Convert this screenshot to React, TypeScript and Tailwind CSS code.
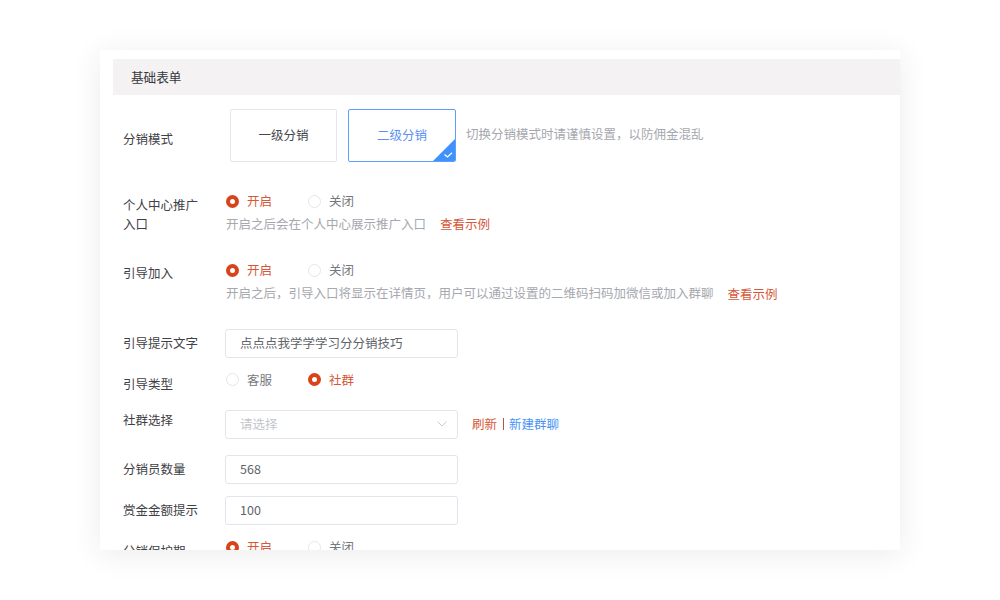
const font = { fontFamily: '"Noto Sans CJK SC", "Liberation Sans", sans-serif' };

function Radio({ label, checked }: { label: string; checked?: boolean }) {
  return (
    <div className="flex w-[82px] items-center">
      {checked ? (
        <span className="h-[13px] w-[13px] rounded-full border-[4px] border-[#d9431a] bg-white" />
      ) : (
        <span className="h-[13px] w-[13px] rounded-full border border-[#e4e6ec] bg-white" />
      )}
      <span className={`ml-[8px] ${checked ? 'text-[#d6573a]' : 'text-[#75787d]'}`}>{label}</span>
    </div>
  );
}

function Field({ value, placeholder, select }: { value?: string; placeholder?: string; select?: boolean }) {
  return (
    <div className="flex h-[29px] w-[233px] items-center justify-between rounded-[3px] border border-[#e3e5ec] bg-white pb-[2px] pl-[14px] pr-[10px]">
      <span className={placeholder ? 'text-[#c3c6cc]' : 'text-[#60636a]'}>{value ?? placeholder}</span>
      {select && (
        <svg width="10" height="6" viewBox="0 0 10 6" fill="none" stroke="#c6c9ce" strokeWidth="1">
          <path d="M0.5 0.6 L5 5 L9.5 0.6" />
        </svg>
      )}
    </div>
  );
}

function Label({ children, top }: { children: React.ReactNode; top: string }) {
  return <div className={`w-[112px] shrink-0 pl-[10px] leading-[19px] text-[#3f4146] ${top}`}>{children}</div>;
}

export default function App() {
  return (
    <div className="flex h-[600px] w-[1000px] items-center justify-center bg-white text-[12.5px] leading-[18px]" style={font}>
      <div className="h-[500px] w-[800px] overflow-hidden bg-white pl-[13px] pt-[9px] shadow-[0_4px_28px_rgba(40,40,60,0.09)]">
        <div className="flex h-[36px] items-center bg-[#f4f2f3] pl-[18px] text-[12.6px] text-[#36383c]">基础表单</div>

        {/* 分销模式 */}
        <div className="mt-[14px] flex">
          <Label top="mt-[20px]">分销模式</Label>
          <div className="flex items-start">
            <div className="ml-[5px] flex h-[53px] w-[107px] items-center justify-center rounded-[2px] border border-[#e5e7ee] pb-[2px] text-[#44464b]">一级分销</div>
            <div className="relative ml-[11px] flex h-[53px] w-[108px] items-center justify-center overflow-hidden rounded-[2px] border border-[#5c9fff] pb-[2px] text-[#5c90f5]">
              二级分销
              <svg className="absolute bottom-0 right-0" width="22" height="22" viewBox="0 0 22 22">
                <path d="M22 0 V22 H0 Z" fill="#3f92fb" />
                <path d="M11.5 15.5 L14.5 18 L19 13.8" fill="none" stroke="#ffffff" strokeWidth="1.3" />
              </svg>
            </div>
            <span className="ml-[10px] mt-[16px] text-[#a5a8ae]">切换分销模式时请谨慎设置，以防佣金混乱</span>
          </div>
        </div>

        {/* 个人中心推广入口 */}
        <div className="mt-[30px] flex">
          <Label top="mt-[3px]">个人中心推广<br />入口</Label>
          <div className="pl-px">
            <div className="flex"><Radio label="开启" checked /><Radio label="关闭" /></div>
            <div className="mt-[5px] flex text-[#a5a8ae]">
              <span>开启之后会在个人中心展示推广入口</span>
              <span className="ml-[14px] text-[#d6573a]">查看示例</span>
            </div>
          </div>
        </div>

        {/* 引导加入 */}
        <div className="mt-[28px] flex">
          <Label top="mt-[2px]">引导加入</Label>
          <div className="pl-px">
            <div className="flex"><Radio label="开启" checked /><Radio label="关闭" /></div>
            <div className="mt-[5px] flex text-[#a5a8ae]">
              <span>开启之后，引导入口将显示在详情页，用户可以通过设置的二维码扫码加微信或加入群聊</span>
              <span className="ml-[14px] mt-[1px] text-[#d6573a]">查看示例</span>
            </div>
          </div>
        </div>

        {/* 引导提示文字 */}
        <div className="mt-[26px] flex items-center">
          <Label top="pb-[2px]">引导提示文字</Label>
          <Field value="点点点我学学学习分分销技巧" />
        </div>

        {/* 引导类型 */}
        <div className="mt-[8px] flex">
          <Label top="mt-[8px]">引导类型</Label>
          <div className="flex pl-px"><Radio label="客服" /><Radio label="社群" checked /></div>
        </div>

        {/* 社群选择 */}
        <div className="mt-[17px] flex">
          <Label top="">社群选择</Label>
          <Field placeholder="请选择" select />
          <div className="ml-[14px] flex items-center pb-[2px]">
            <span className="text-[#d6573a]">刷新</span>
            <span className="ml-[6px] mr-[5px] h-[12px] w-px bg-[#b5544a]" />
            <span className="text-[#4a94f8]">新建群聊</span>
          </div>
        </div>

        {/* 分销员数量 */}
        <div className="mt-[16px] flex items-center">
          <Label top="pb-[2px]">分销员数量</Label>
          <Field value="568" />
        </div>

        {/* 赏金金额提示 */}
        <div className="mt-[12px] flex items-center">
          <Label top="pb-[2px]">赏金金额提示</Label>
          <Field value="100" />
        </div>

        {/* 分销保护期 */}
        <div className="mt-[9px] flex">
          <Label top="mt-[7px]">分销保护期</Label>
          <div className="flex pl-px"><Radio label="开启" checked /><Radio label="关闭" /></div>
        </div>
      </div>
    </div>
  );
}
